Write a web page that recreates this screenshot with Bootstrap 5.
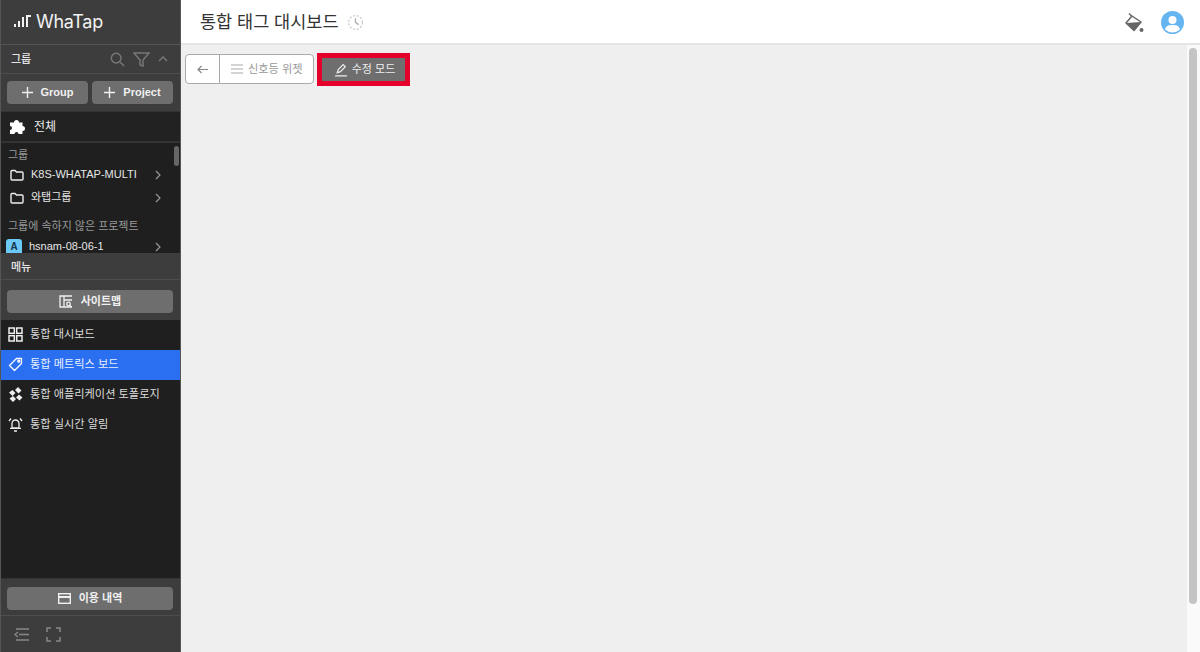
<!DOCTYPE html>
<html lang="ko">
<head>
  <meta charset="UTF-8" />
  <title>WhaTap</title>
  <link href="https://cdn.jsdelivr.net/npm/bootstrap@5.3.0/dist/css/bootstrap.min.css" rel="stylesheet" />
  <style>
    body {
      height: 652px;
      overflow: hidden;
      font-family: "Liberation Sans", "Noto Sans CJK KR", sans-serif;
      background: #efefef;
    }
    svg { display: block; flex-shrink: 0; }

    /* sidebar */
    #side { width: 181px; height: 652px; background: #3d3d3d; border-left: 1px solid #555; border-right: 1px solid #555; color: #fff; }
    .logo-bar { height: 45px; padding: 0 0 2px 13px; border-bottom: 1px solid #555; }
    .logo-text { font-family: "Inter", sans-serif; font-size: 18px; letter-spacing: -0.3px; margin-left: 5px; color: #f2f2f2; }
    .side-head { height: 29px; padding: 0 12px 0 10px; font-size: 11px; font-weight: 500; color: #e6e6e6; border-bottom: 1px solid #4d4d4d; }
    .btn-grey { background: #6e6e6e; color: #f0f0f0; border: 0; border-radius: 4px; height: 23px; font-size: 11px; font-weight: 700; padding: 0; }
    .btn-grey:hover { background: #6e6e6e; color: #f0f0f0; }
    .half-btn { flex: 1 1 0; }
    .btn-row { padding: 7px 7px 8px 6px; height: 37px; }
    .all-row { height: 30px; background: #222; border-top: 1px solid #333; padding-left: 8px; font-size: 12px; color: #eee; }
    .tree { height: 112px; background: #1f1f1f; border-top: 2px solid #333; overflow: hidden; position: relative; }
    .tree-label { font-size: 11px; color: #999; padding-left: 7px; line-height: 14px; }
    .tree-first { margin-top: 5px; }
    .tree-second { margin-top: 10px; }
    .tree-gap { height: 1px; }
    .tree-item { height: 23px; font-size: 11px; color: #e6e6e6; padding-left: 9px; padding-right: 19px; }
    .tree-last { margin-top: 2px; }
    .tree-item .name { margin-left: 7px; flex: 1; }
    .thumb { position: absolute; right: 1px; top: 3px; width: 5px; height: 20px; background: #666; border-radius: 3px; }
    .proj-badge { width: 16px; height: 15px; background: #6cc9f5; color: #163347; font-size: 10px; font-weight: 700; border-radius: 3px 3px 0 0; text-align: center; line-height: 15px; margin-left: -4px; }
    .menu-head { height: 27px; padding: 3px 0 0 10px; font-size: 11px; font-weight: 500; color: #e6e6e6; border-bottom: 1px solid #4d4d4d; }
    .map-wrap { padding: 10px 7px 8px 6px; height: 40px; }
    .menu-list { flex: 1; background: #1f1f1f; }
    .menu-row { height: 30px; padding: 0 0 2px 7px; font-size: 11.2px; color: #dcdcdc; }
    .menu-row.on { background: #2a6ff0; color: #e8efff; }
    .menu-row span { margin-left: 7px; }
    .foot-btn { height: 38px; padding: 8px 7px 7px 6px; border-top: 1px solid #333; border-bottom: 1px solid #4d4d4d; }
    .foot-icons { height: 36px; padding-left: 13px; gap: 17px; }

    /* main */
    .main-col { height: 652px; }
    .top-bar { height: 45px; background: #fff; border-bottom: 2px solid #e4e4e4; padding: 2px 16px 0 19px; }
    .page-title { font-size: 17.5px; color: #333; font-weight: 400; }
    .work-area { padding: 9px 0 0 4px; }
    .tool-group { height: 30px; width: 129px; background: #fff; border: 1px solid #aaa; border-radius: 4px; font-size: 11.2px; color: #999; }
    .tool-back { width: 34px; border-right: 1px solid #aaa; height: 100%; }
    .tool-lines { margin-left: 11px; }
    .tool-name { margin-left: 5px; }
    .edit-outline { border: 5px solid #e4002b; height: 33px; width: 93px; margin-left: 3px; margin-top: -1px; padding: 0; }
    .edit-btn { background: #6e6e6e; color: #eee; font-size: 11px; height: 100%; padding: 0 0 0 2px; width: 100%; margin: 0; }
    .edit-btn:hover { background: #6e6e6e; color: #eee; }
    .track { width: 13px; background: #fafafa; position: relative; }
    .track-thumb { position: absolute; left: 2px; top: 3px; bottom: 48px; width: 8px; border-radius: 4px; background: #c4c4c4; }
  </style>
</head>
<body>
  <div class="d-flex">
    <!-- Sidebar -->
    <div id="side" class="d-flex flex-column flex-shrink-0">
      <div class="logo-bar d-flex align-items-center">
        <svg width="17" height="14" viewBox="0 0 17 14" fill="#f2f2f2"><rect x="0" y="10" width="2" height="3"/><rect x="4" y="7" width="2" height="6"/><rect x="8" y="3" width="2" height="10"/><path d="M12 1h5v2h-3v10h-2z"/></svg>
        <span class="logo-text">WhaTap</span>
      </div>
      <div class="side-head d-flex align-items-center">
        <span class="me-auto">그룹</span>
        <svg width="15" height="15" viewBox="0 0 17 17" fill="none" stroke="#777" stroke-width="1.600"><circle cx="7" cy="7" r="5.500"/><path d="M11 11l5 5"/></svg>
        <svg class="ms-2" width="17" height="15" viewBox="0 0 17 15" fill="none" stroke="#777" stroke-width="1.500"><path d="M1 1h15l-6 7v6l-3-1V8z"/></svg>
        <svg class="ms-2" width="10" height="6" viewBox="0 0 10 6" fill="none" stroke="#777" stroke-width="1.500"><path d="M1 5l4-4 4 4"/></svg>
      </div>
      <div class="btn-row d-flex gap-1">
        <button class="btn btn-grey half-btn d-flex align-items-center justify-content-center"><svg class="me-2" width="11" height="11" viewBox="0 0 11 11" stroke="#f0f0f0" stroke-width="1.4"><path d="M5.500 0v11M0 5.500h11"/></svg>Group</button>
        <button class="btn btn-grey half-btn d-flex align-items-center justify-content-center"><svg class="me-2" width="11" height="11" viewBox="0 0 11 11" stroke="#f0f0f0" stroke-width="1.4"><path d="M5.500 0v11M0 5.500h11"/></svg>Project</button>
      </div>
      <div class="all-row d-flex align-items-center">
        <svg width="17" height="17" viewBox="0 0 17 17" fill="#fff"><path d="M1 4.500h4a2.500 2.500 0 1 1 5 0h3.500V8a2.500 2.500 0 1 1 0 5v3h-4a2 2 0 1 0-4 0H1v-4a2 2 0 1 0 0-4z"/></svg>
        <span class="ms-2">전체</span>
      </div>
      <div class="tree">
        <div class="thumb"></div>
        <div class="tree-label tree-first">그룹</div>
        <div class="tree-gap"></div>
        <div class="tree-item d-flex align-items-center">
          <svg width="14" height="12" viewBox="0 0 14 12" fill="none" stroke="#eee" stroke-width="1.400"><path d="M1 2.500a1 1 0 0 1 1-1h3l1.500 1.500H12a1 1 0 0 1 1 1v6a1 1 0 0 1-1 1H2a1 1 0 0 1-1-1z"/></svg>
          <span class="name">K8S-WHATAP-MULTI</span>
          <svg width="6" height="10" viewBox="0 0 6 10" fill="none" stroke="#999" stroke-width="1.200"><path d="M1 1l4 4-4 4"/></svg>
        </div>
        <div class="tree-item d-flex align-items-center">
          <svg width="14" height="12" viewBox="0 0 14 12" fill="none" stroke="#eee" stroke-width="1.400"><path d="M1 2.500a1 1 0 0 1 1-1h3l1.500 1.500H12a1 1 0 0 1 1 1v6a1 1 0 0 1-1 1H2a1 1 0 0 1-1-1z"/></svg>
          <span class="name">와탭그룹</span>
          <svg width="6" height="10" viewBox="0 0 6 10" fill="none" stroke="#999" stroke-width="1.200"><path d="M1 1l4 4-4 4"/></svg>
        </div>
        <div class="tree-label tree-second">그룹에 속하지 않은 프로젝트</div>
        <div class="tree-item tree-last d-flex align-items-center">
          <div class="proj-badge flex-shrink-0">A</div>
          <span class="name">hsnam-08-06-1</span>
          <svg width="6" height="10" viewBox="0 0 6 10" fill="none" stroke="#999" stroke-width="1.200"><path d="M1 1l4 4-4 4"/></svg>
        </div>
      </div>
      <div class="menu-head d-flex align-items-center">메뉴</div>
      <div class="map-wrap">
        <button class="btn btn-grey w-100 d-flex align-items-center justify-content-center">
          <svg class="me-2" width="14" height="13" viewBox="0 0 14 13" fill="none" stroke="#f0f0f0" stroke-width="1.300"><path d="M13 1H1v11h12M5 1v11M5 5h8"/><circle cx="9.500" cy="9" r="1.800"/><path d="M11 10.500l1.500 1.500"/></svg>사이트맵
        </button>
      </div>
      <div class="menu-list">
        <div class="menu-row d-flex align-items-center">
          <svg width="15" height="15" viewBox="0 0 15 15" fill="none" stroke="#eee" stroke-width="1.500"><rect x="1" y="1" width="5.300" height="5.300"/><rect x="8.700" y="1" width="5.300" height="5.300"/><rect x="1" y="8.700" width="5.300" height="5.300"/><rect x="8.700" y="8.700" width="5.300" height="5.300"/></svg>
          <span>통합 대시보드</span>
        </div>
        <div class="menu-row on d-flex align-items-center">
          <svg width="15" height="15" viewBox="0 0 15 15" fill="none" stroke="#fff" stroke-width="1.300"><path d="M8.500 1.500h5v5l-7 7-5-5z" stroke-linejoin="round"/><circle cx="10.800" cy="4.200" r="1"/></svg>
          <span>통합 메트릭스 보드</span>
        </div>
        <div class="menu-row d-flex align-items-center">
          <svg width="15" height="15" viewBox="0 0 15 15" fill="#eee"><path d="M10 0l3.500 3.500-3 3L7 3zM4.500 3l3 3-3 3-3.500-3.500zM11 7.500l3.500 3-3 3L8 10.500zM5 9l3 3-3 3-3.500-3.500z"/><path d="M7.500 6.500l1 1-1 1-1-1z" fill="#1f1f1f"/></svg>
          <span>통합 애플리케이션 토폴로지</span>
        </div>
        <div class="menu-row d-flex align-items-center">
          <svg width="15" height="15" viewBox="0 0 15 15" fill="none" stroke="#eee" stroke-width="1.300"><path d="M4 11V6.500a3.500 3.500 0 0 1 7 0V11zM2 11.300h11M6 14h3M1 4l2-2.500M14 4l-2-2.500"/></svg>
          <span>통합 실시간 알림</span>
        </div>
      </div>
      <div class="foot-btn">
        <button class="btn btn-grey w-100 d-flex align-items-center justify-content-center">
          <svg class="me-2" width="13" height="11" viewBox="0 0 13 11" fill="none" stroke="#f0f0f0" stroke-width="1.400"><rect x="0.700" y="0.700" width="11.600" height="9.600"/><path d="M1 4h11" stroke-width="2"/></svg>이용 내역
        </button>
      </div>
      <div class="foot-icons d-flex align-items-center">
        <svg width="15" height="13" viewBox="0 0 15 13" fill="none" stroke="#888" stroke-width="1.300"><path d="M2 1h13M5 6.500h10M2 12h13M4 4L1 6.500 4 9"/></svg>
        <svg width="15" height="15" viewBox="0 0 15 15" fill="none" stroke="#888" stroke-width="1.500"><path d="M1 5V1h4M10 1h4v4M14 10v4h-4M5 14H1v-4"/></svg>
      </div>
    </div>

    <!-- Main -->
    <div class="main-col flex-grow-1 d-flex flex-column">
      <div class="top-bar d-flex align-items-center">
        <span class="page-title">통합 태그 대시보드</span>
        <svg class="ms-2" width="17" height="17" viewBox="0 0 16 16" fill="none" stroke="#ccc" stroke-width="1.200"><circle cx="8" cy="8" r="6.500" stroke-dasharray="2 1.500"/><path d="M8 4v4l3 2" stroke="#aaa"/></svg>
        <svg class="ms-auto" width="20" height="20" viewBox="0 0 20 20"><path d="M4 0.500l4 4" stroke="#666" stroke-width="1.500"/><path d="M7 3L16 9 9 17.500 1 10z" fill="#fff" stroke="#666" stroke-width="1.500" stroke-linejoin="round"/><path d="M1 10L16 9 9 17.500z" fill="#666"/><circle cx="16.500" cy="17" r="2" fill="#666"/></svg>
        <svg class="ms-3" width="23" height="23" viewBox="0 0 23 23"><circle cx="11.500" cy="11.500" r="11.500" fill="#64b5f0"/><circle cx="11.500" cy="9" r="4" fill="#fff"/><path d="M4 18.500c1-4 4-4.500 7.500-4.500s6.500.5 7.500 4.500a11 11 0 0 1-15 0z" fill="#fff"/></svg>
      </div>
      <div class="flex-grow-1 d-flex">
        <div class="work-area flex-grow-1 d-flex align-items-start">
          <div class="tool-group d-flex align-items-center">
            <div class="tool-back d-flex align-items-center justify-content-center">
              <svg width="11" height="9" viewBox="0 0 11 9" fill="none" stroke="#888" stroke-width="1.200"><path d="M11 4.500H1M4.500 1L1 4.500 4.500 8"/></svg>
            </div>
            <svg class="tool-lines" width="12" height="10" viewBox="0 0 12 10" stroke="#aaa" stroke-width="1.200"><path d="M0 1h12M0 5h12M0 9h12"/></svg>
            <span class="tool-name">신호등 위젯</span>
          </div>
          <div class="edit-outline">
            <button class="btn edit-btn rounded-0 d-flex align-items-center justify-content-center border-0">
              <svg class="me-1" width="14" height="14" viewBox="0 0 13 13" fill="none" stroke="#eee" stroke-width="1.100"><path d="M3 9l1-3 4.500-4.500 2 2L6 8zM1 12h11"/></svg>수정 모드
            </button>
          </div>
        </div>
        <div class="track"><div class="track-thumb"></div></div>
      </div>
    </div>
  </div>
  <script src="https://cdn.jsdelivr.net/npm/bootstrap@5.3.0/dist/js/bootstrap.bundle.min.js"></script>
</body>
</html>
